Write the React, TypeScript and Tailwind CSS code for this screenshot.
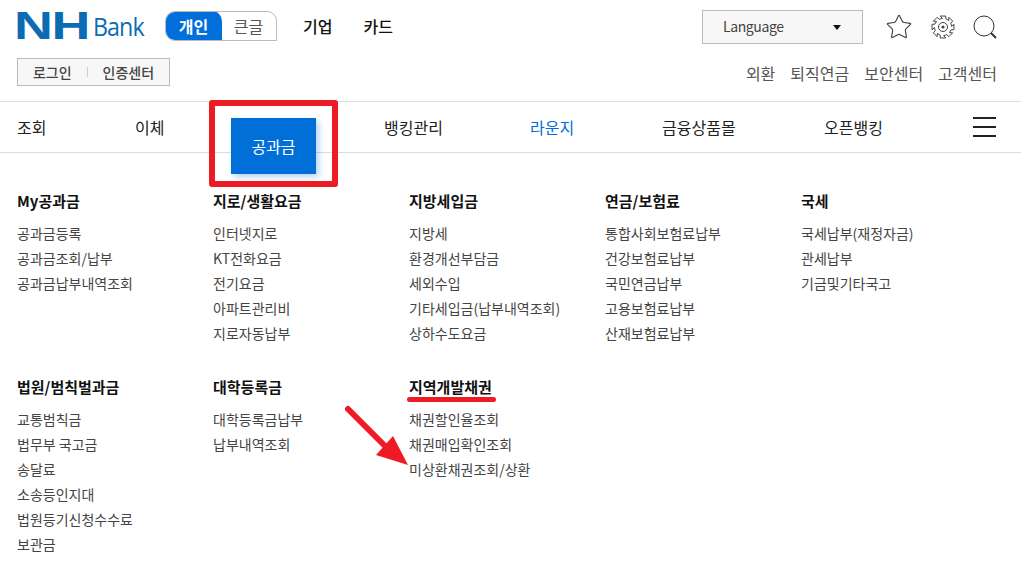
import { Star } from "lucide-react";

const topRow = [
  { title: "My공과금", items: ["공과금등록", "공과금조회/납부", "공과금납부내역조회"] },
  { title: "지로/생활요금", items: ["인터넷지로", "KT전화요금", "전기요금", "아파트관리비", "지로자동납부"] },
  { title: "지방세입금", items: ["지방세", "환경개선부담금", "세외수입", "기타세입금(납부내역조회)", "상하수도요금"] },
  { title: "연금/보험료", items: ["통합사회보험료납부", "건강보험료납부", "국민연금납부", "고용보험료납부", "산재보험료납부"] },
  { title: "국세", items: ["국세납부(재정자금)", "관세납부", "기금및기타국고"] },
];

const bottomRow = [
  { title: "법원/범칙벌과금", items: ["교통범칙금", "법무부 국고금", "송달료", "소송등인지대", "법원등기신청수수료", "보관금"] },
  { title: "대학등록금", items: ["대학등록금납부", "납부내역조회"] },
  { title: "지역개발채권", items: ["채권할인율조회", "채권매입확인조회", "미상환채권조회/상환"] },
];

function MenuColumn({ title, items }: { title: string; items: string[] }) {
  return (
    <div className="w-[196px]">
      <h3 className="h-[24px] text-[15px] leading-[24px] font-bold text-[#111]">{title}</h3>
      <ul className="mt-[8px]">
        {items.map((item) => (
          <li key={item} className="h-[25px] text-[14px] leading-[25px] text-[#444]">
            {item}
          </li>
        ))}
      </ul>
    </div>
  );
}

// cog outline: 8 teeth around the ring
function cogPath() {
  const pts: string[] = [];
  const steps: [number, number][] = [
    [-14, 11.3],
    [14, 11.3],
    [19, 8.6],
    [41, 8.6],
  ];
  for (let i = 0; i < 8; i++) {
    for (const [offset, r] of steps) {
      const a = ((i * 45 + offset - 90) * Math.PI) / 180;
      pts.push(`${(12 + r * Math.cos(a)).toFixed(2)} ${(12 + r * Math.sin(a)).toFixed(2)}`);
    }
  }
  return `M${pts.join("L")}Z`;
}

function GearIcon() {
  return (
    <svg className="ml-[18px]" width="24" height="24" viewBox="0 0 24 24" fill="none" stroke="#444" strokeWidth="1">
      <path d={cogPath()} strokeLinejoin="round" />
      <circle cx="12" cy="12" r="4.5" />
      <circle cx="12" cy="12" r="1.6" fill="#444" stroke="none" />
    </svg>
  );
}

function SearchIcon() {
  return (
    <svg className="ml-[18px]" width="24" height="24" viewBox="0 0 24 24" fill="none" stroke="#333">
      <circle cx="11" cy="11" r="10" strokeWidth="1" />
      <line x1="18" y1="18" x2="23" y2="23" strokeWidth="2" />
    </svg>
  );
}

export default function App() {
  return (
    <div className="relative h-[569px] w-[1021px] overflow-hidden bg-white font-['Noto_Sans_CJK_KR','Noto_Sans',sans-serif]">
      {/* Header */}
      <header className="flex h-[102px] justify-between border-b border-[#ddd] pl-[17px] pr-[24px]">
        <div className="flex flex-col">
          <div className="mt-[11px] flex h-[30px] items-center">
            <div className="flex w-[148px] items-center text-[#0b6cb3]">
              <span className="-ml-[3px] origin-left scale-x-[1.38] font-['Liberation_Sans',sans-serif] text-[39px] leading-[30px] font-bold tracking-[-1px]">
                NH
              </span>
              <span className="ml-[25px] origin-left scale-x-[0.93] font-['Open_Sans',sans-serif] text-[25px] leading-[30px] font-medium tracking-[-1px]">
                Bank
              </span>
            </div>
            <div className="flex h-[30px] w-[112px] overflow-hidden rounded-l-[10px] rounded-tr-[10px] border border-[#bbb] text-[16px]">
              <div className="-m-px flex w-[57px] items-center justify-center rounded-tr-[10px] bg-[#006fdb] font-bold text-white">
                개인
              </div>
              <div className="flex flex-1 items-center justify-center text-[#555]">큰글</div>
            </div>
            <span className="ml-[26px] text-[16px] font-medium text-[#111]">기업</span>
            <span className="ml-[31px] text-[16px] font-medium text-[#111]">카드</span>
          </div>
          <div className="mt-[17px] flex h-[28px] w-[153px] items-center justify-center border border-[#bbb] bg-[#f7f7f7] text-[14px] font-medium text-[#444]">
            <span>로그인</span>
            <span className="mx-[15px] h-[10px] w-px bg-[#ccc]" />
            <span>인증센터</span>
          </div>
        </div>
        <div className="flex flex-col items-end">
          <div className="mt-[10px] flex h-[34px] items-center">
            <div className="flex h-[34px] w-[161px] items-center justify-between border border-[#bbb] bg-[#f7f7f7] pr-[21px] pl-[20px] text-[14px] leading-[30px] tracking-[-0.4px] text-[#444]">
              <span className="-mt-[2px]">Language</span>
              <span className="h-0 w-0 border-x-[4px] border-t-[5px] border-x-transparent border-t-[#111]" />
            </div>
            <Star className="ml-[22px] text-[#444]" size={28} strokeWidth={1} />
            <GearIcon />
            <SearchIcon />
          </div>
          <nav className="mt-[17px] flex gap-[15px] text-[16px] leading-[24px] text-[#555]">
            <span>외환</span>
            <span>퇴직연금</span>
            <span>보안센터</span>
            <span>고객센터</span>
          </nav>
        </div>
      </header>

      {/* Main nav */}
      <nav className="flex h-[51px] items-center border-b border-[#ddd] pb-[1px] pl-[17px] text-[16px] text-[#222]">
        <span className="w-[118px]">조회</span>
        <span className="w-[116px]">이체</span>
        <span className="w-[133px]" />
        <span className="w-[146px]">뱅킹관리</span>
        <span className="w-[132px] text-[#006fdb]">라운지</span>
        <span className="w-[162px]">금융상품몰</span>
        <span className="w-[149px]">오픈뱅킹</span>
        <span className="flex w-[23px] flex-col gap-[7px]">
          <i className="h-[2px] bg-[#222]" />
          <i className="h-[2px] bg-[#222]" />
          <i className="h-[2px] bg-[#222]" />
        </span>
      </nav>

      {/* Mega menu */}
      <div className="pt-[36px] pl-[17px]">
        <div className="flex h-[186px]">
          {topRow.map((col) => (
            <MenuColumn key={col.title} {...col} />
          ))}
        </div>
        <div className="flex">
          {bottomRow.map((col) => (
            <MenuColumn key={col.title} {...col} />
          ))}
        </div>
      </div>

      {/* Active tab and annotations */}
      <div className="absolute top-[118px] left-[231px] flex h-[56px] w-[85px] items-center justify-center bg-[#006fd8] text-[16px] text-white shadow-[3px_3px_6px_rgba(0,111,216,0.3)]">
        공과금
      </div>
      <div className="absolute top-[100px] left-[209px] h-[87px] w-[129px] rounded-[3px] border-[6px] border-[#ed1c24]" />
      <div className="absolute top-[397px] left-[407px] h-[5px] w-[89px] rounded-full bg-[#ed1c24]" />
      <svg className="absolute top-[400px] left-[340px]" width="70" height="70" viewBox="0 0 70 70">
        <line x1="8" y1="9" x2="46" y2="47" stroke="#ed1c24" strokeWidth="6" strokeLinecap="round" />
        <polygon points="68,65 36,55 53,36" fill="#ed1c24" />
      </svg>
    </div>
  );
}
